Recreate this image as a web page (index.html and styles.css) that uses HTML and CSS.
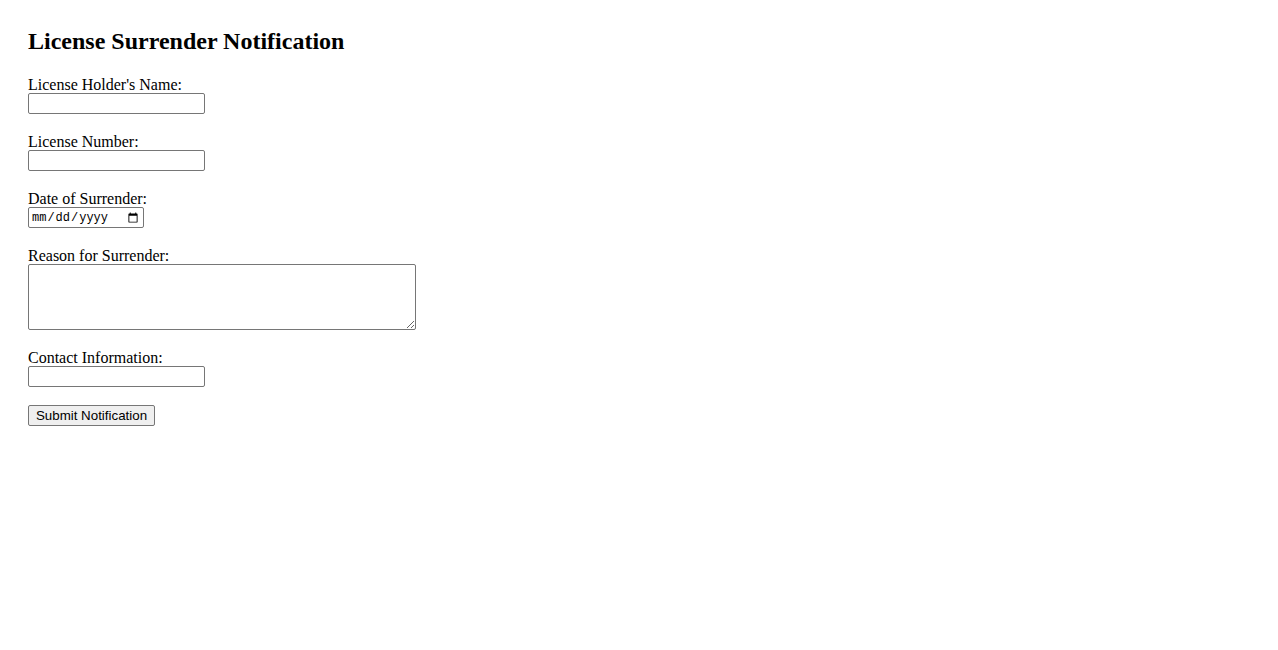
FILE: index.html
```html
<!DOCTYPE html>
<html>
<head>
<meta charset="utf-8">
<title>License Surrender Notification</title>
<link rel="stylesheet" href="styles.css">
</head>
<body>
<div class="page">
  <h2 class="title">License Surrender Notification</h2>
  <form class="form">
    <div class="field">
      <label class="label" for="name">License Holder's Name:</label>
      <input class="text-input" type="text" id="name">
    </div>
    <div class="field">
      <label class="label" for="number">License Number:</label>
      <input class="text-input" type="text" id="number">
    </div>
    <div class="field">
      <label class="label" for="date">Date of Surrender:</label>
      <input class="date-input" type="date" id="date">
    </div>
    <div class="field">
      <label class="label" for="reason">Reason for Surrender:</label>
      <textarea class="textarea" id="reason" rows="4" cols="50"></textarea>
    </div>
    <div class="field">
      <label class="label" for="contact">Contact Information:</label>
      <input class="text-input" type="text" id="contact">
    </div>
    <button class="submit" type="button">Submit Notification</button>
  </form>
</div>
</body>
</html>
```
FILE: styles.css
```css
html, body {
  margin: 0;
  padding: 0;
  background: #ffffff;
}
body {
  font-family: "Liberation Serif", "Times New Roman", serif;
  font-size: 16px;
  color: #000000;
}
.page {
  padding: 28px;
}
.title {
  margin: 0 0 20px 0;
  font-size: 24px;
  line-height: 27px;
  font-weight: bold;
}
.form {
  margin: 0;
}
.field {
  margin-bottom: 18px;
}
.label {
  display: block;
  padding-top: 1px;
  line-height: 17px;
}
.text-input,
.date-input,
.textarea {
  display: block;
  box-sizing: border-box;
  margin: 0;
  border: 1px solid #767676;
  border-radius: 2px;
  background: #ffffff;
  padding: 1px 2px;
  font-family: "Liberation Sans", Arial, sans-serif;
  font-size: 13.33px;
}
.text-input {
  width: 177px;
  height: 21px;
}
.date-input {
  width: 116px;
  height: 21px;
  font-family: "Liberation Mono", "DejaVu Sans Mono", monospace;
  font-size: 12px;
}
.textarea {
  width: 388px;
  height: 66px;
  resize: both;
  font-family: "Liberation Mono", monospace;
}
.submit {
  display: block;
  box-sizing: border-box;
  margin: 0;
  width: 127px;
  height: 21px;
  padding: 1px 6px;
  border: 1px solid #767676;
  border-radius: 2px;
  background: #efefef;
  color: #000000;
  font-family: "Liberation Sans", Arial, sans-serif;
  font-size: 13.33px;
}
```
